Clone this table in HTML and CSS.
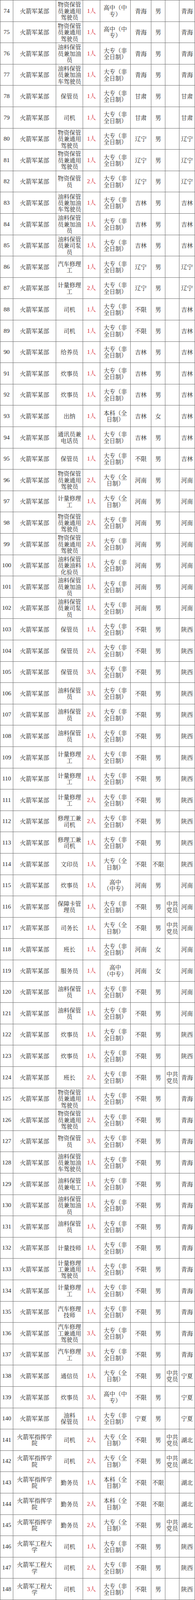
FILE: index.html
```html
<!DOCTYPE html>
<html lang="zh-CN">
<head>
<meta charset="utf-8">
<title>招聘岗位表</title>
<link rel="stylesheet" href="styles.css">
</head>
<body>
<div class="grid">
<div class="row"><div class="c n">74</div><div class="c">火箭军某部</div><div class="c">物资保管<br>员兼通用<br>驾驶员</div><div class="c cnt">1人</div><div class="c">高中（中<br>专）</div><div class="c">青海</div><div class="c">男</div><div class="c"></div><div class="c">青海</div></div>
<div class="row"><div class="c n">75</div><div class="c">火箭军某部</div><div class="c">物资保管<br>员兼通用<br>驾驶员</div><div class="c cnt">1人</div><div class="c">高中（中<br>专）</div><div class="c">青海</div><div class="c">男</div><div class="c"></div><div class="c">青海</div></div>
<div class="row"><div class="c n">76</div><div class="c">火箭军某部</div><div class="c">油料保管<br>员兼加油<br>员</div><div class="c cnt">1人</div><div class="c">大专（非<br>全日制）</div><div class="c">青海</div><div class="c">男</div><div class="c"></div><div class="c">青海</div></div>
<div class="row"><div class="c n">77</div><div class="c">火箭军某部</div><div class="c">油料保管<br>员兼加油<br>车驾驶员</div><div class="c cnt">1人</div><div class="c">大专（非<br>全日制）</div><div class="c">青海</div><div class="c">男</div><div class="c"></div><div class="c">青海</div></div>
<div class="row"><div class="c n">78</div><div class="c">火箭军某部</div><div class="c">保管员</div><div class="c cnt">1人</div><div class="c">大专（非<br>全日制）</div><div class="c">甘肃</div><div class="c">男</div><div class="c"></div><div class="c">甘肃</div></div>
<div class="row"><div class="c n">79</div><div class="c">火箭军某部</div><div class="c">司机</div><div class="c cnt">1人</div><div class="c">大专（非<br>全日制）</div><div class="c">甘肃</div><div class="c">男</div><div class="c"></div><div class="c">甘肃</div></div>
<div class="row"><div class="c n">80</div><div class="c">火箭军某部</div><div class="c">物资保管<br>员兼通用<br>驾驶员</div><div class="c cnt">1人</div><div class="c">大专（非<br>全日制）</div><div class="c">辽宁</div><div class="c">男</div><div class="c"></div><div class="c">辽宁</div></div>
<div class="row"><div class="c n">81</div><div class="c">火箭军某部</div><div class="c">物资保管<br>员兼通用<br>驾驶员</div><div class="c cnt">1人</div><div class="c">大专（非<br>全日制）</div><div class="c">辽宁</div><div class="c">男</div><div class="c"></div><div class="c">辽宁</div></div>
<div class="row"><div class="c n">82</div><div class="c">火箭军某部</div><div class="c">物资保管<br>员</div><div class="c cnt">2人</div><div class="c">大专（非<br>全日制）</div><div class="c">辽宁</div><div class="c">男</div><div class="c"></div><div class="c">辽宁</div></div>
<div class="row"><div class="c n">83</div><div class="c">火箭军某部</div><div class="c">油料保管<br>员兼加油<br>车驾驶员</div><div class="c cnt">1人</div><div class="c">大专（非<br>全日制）</div><div class="c">吉林</div><div class="c">男</div><div class="c"></div><div class="c">吉林</div></div>
<div class="row"><div class="c n">84</div><div class="c">火箭军某部</div><div class="c">油料保管<br>员兼加油<br>员</div><div class="c cnt">1人</div><div class="c">大专（非<br>全日制）</div><div class="c">吉林</div><div class="c">男</div><div class="c"></div><div class="c">吉林</div></div>
<div class="row"><div class="c n">85</div><div class="c">火箭军某部</div><div class="c">油料保管<br>员兼司泵<br>员</div><div class="c cnt">1人</div><div class="c">大专（非<br>全日制）</div><div class="c">吉林</div><div class="c">男</div><div class="c"></div><div class="c">吉林</div></div>
<div class="row"><div class="c n">86</div><div class="c">火箭军某部</div><div class="c">汽车修理<br>工</div><div class="c cnt">1人</div><div class="c">大专（非<br>全日制）</div><div class="c">辽宁</div><div class="c">男</div><div class="c"></div><div class="c">辽宁</div></div>
<div class="row"><div class="c n">87</div><div class="c">火箭军某部</div><div class="c">计量修理<br>工</div><div class="c cnt">2人</div><div class="c">大专（非<br>全日制）</div><div class="c">辽宁</div><div class="c">男</div><div class="c"></div><div class="c">辽宁</div></div>
<div class="row"><div class="c n">88</div><div class="c">火箭军某部</div><div class="c">司机</div><div class="c cnt">1人</div><div class="c">大专（非<br>全日制）</div><div class="c">不限</div><div class="c">男</div><div class="c"></div><div class="c">吉林</div></div>
<div class="row"><div class="c n">89</div><div class="c">火箭军某部</div><div class="c">司机</div><div class="c cnt">1人</div><div class="c">大专（非<br>全日制）</div><div class="c">不限</div><div class="c">男</div><div class="c"></div><div class="c">吉林</div></div>
<div class="row"><div class="c n">90</div><div class="c">火箭军某部</div><div class="c">给养员</div><div class="c cnt">1人</div><div class="c">大专（非<br>全日制）</div><div class="c">吉林</div><div class="c">男</div><div class="c"></div><div class="c">吉林</div></div>
<div class="row"><div class="c n">91</div><div class="c">火箭军某部</div><div class="c">炊事员</div><div class="c cnt">1人</div><div class="c">大专（非<br>全日制）</div><div class="c">吉林</div><div class="c">男</div><div class="c"></div><div class="c">吉林</div></div>
<div class="row"><div class="c n">92</div><div class="c">火箭军某部</div><div class="c">炊事员</div><div class="c cnt">1人</div><div class="c">大专（非<br>全日制）</div><div class="c">吉林</div><div class="c">男</div><div class="c"></div><div class="c">吉林</div></div>
<div class="row"><div class="c n">93</div><div class="c">火箭军某部</div><div class="c">出纳</div><div class="c cnt">1人</div><div class="c">本科（全<br>日制）</div><div class="c">吉林</div><div class="c">女</div><div class="c"></div><div class="c">吉林</div></div>
<div class="row"><div class="c n">94</div><div class="c">火箭军某部</div><div class="c">通讯员兼<br>电话员</div><div class="c cnt">1人</div><div class="c">大专（非<br>全日制）</div><div class="c">吉林</div><div class="c">男</div><div class="c"></div><div class="c">吉林</div></div>
<div class="row"><div class="c n">95</div><div class="c">火箭军某部</div><div class="c">保管员</div><div class="c cnt">1人</div><div class="c">大专（非<br>全日制）</div><div class="c">不限</div><div class="c">男</div><div class="c"></div><div class="c">吉林</div></div>
<div class="row"><div class="c n">96</div><div class="c">火箭军某部</div><div class="c">物资保管<br>员兼通用<br>驾驶员</div><div class="c cnt">2人</div><div class="c">大专（全<br>日制）</div><div class="c">河南</div><div class="c">男</div><div class="c"></div><div class="c">河南</div></div>
<div class="row"><div class="c n">97</div><div class="c">火箭军某部</div><div class="c">计量修理<br>工</div><div class="c cnt">1人</div><div class="c">大专（全<br>日制）</div><div class="c">河南</div><div class="c">男</div><div class="c"></div><div class="c">河南</div></div>
<div class="row"><div class="c n">98</div><div class="c">火箭军某部</div><div class="c">物资保管<br>员兼通用<br>驾驶员</div><div class="c cnt">2人</div><div class="c">大专（非<br>全日制）</div><div class="c">河南</div><div class="c">男</div><div class="c"></div><div class="c">河南</div></div>
<div class="row"><div class="c n">99</div><div class="c">火箭军某部</div><div class="c">物资保管<br>员兼通用<br>驾驶员</div><div class="c cnt">2人</div><div class="c">大专（非<br>全日制）</div><div class="c">河南</div><div class="c">男</div><div class="c"></div><div class="c">河南</div></div>
<div class="row"><div class="c n">100</div><div class="c">火箭军某部</div><div class="c">油料保管<br>员兼油料<br>化验员</div><div class="c cnt">1人</div><div class="c">大专（非<br>全日制）</div><div class="c">河南</div><div class="c">男</div><div class="c"></div><div class="c">河南</div></div>
<div class="row"><div class="c n">101</div><div class="c">火箭军某部</div><div class="c">油料保管<br>员兼加油<br>员</div><div class="c cnt">1人</div><div class="c">大专（非<br>全日制）</div><div class="c">河南</div><div class="c">男</div><div class="c"></div><div class="c">河南</div></div>
<div class="row"><div class="c n">102</div><div class="c">火箭军某部</div><div class="c">油料保管<br>员兼司泵<br>员</div><div class="c cnt">1人</div><div class="c">大专（非<br>全日制）</div><div class="c">河南</div><div class="c">男</div><div class="c"></div><div class="c">河南</div></div>
<div class="row"><div class="c n">103</div><div class="c">火箭军某部</div><div class="c">保管员</div><div class="c cnt">1人</div><div class="c">大专（非<br>全日制）</div><div class="c">不限</div><div class="c">男</div><div class="c"></div><div class="c">陕西</div></div>
<div class="row"><div class="c n">104</div><div class="c">火箭军某部</div><div class="c">保管员</div><div class="c cnt">2人</div><div class="c">大专（非<br>全日制）</div><div class="c">不限</div><div class="c">男</div><div class="c"></div><div class="c">陕西</div></div>
<div class="row"><div class="c n">105</div><div class="c">火箭军某部</div><div class="c">保管员</div><div class="c cnt">3人</div><div class="c">大专（非<br>全日制）</div><div class="c">不限</div><div class="c">男</div><div class="c"></div><div class="c">陕西</div></div>
<div class="row"><div class="c n">106</div><div class="c">火箭军某部</div><div class="c">油料保管<br>员</div><div class="c cnt">3人</div><div class="c">大专（非<br>全日制）</div><div class="c">不限</div><div class="c">男</div><div class="c"></div><div class="c">陕西</div></div>
<div class="row"><div class="c n">107</div><div class="c">火箭军某部</div><div class="c">油料保管<br>员</div><div class="c cnt">2人</div><div class="c">大专（非<br>全日制）</div><div class="c">不限</div><div class="c">男</div><div class="c"></div><div class="c">陕西</div></div>
<div class="row"><div class="c n">108</div><div class="c">火箭军某部</div><div class="c">油料保管<br>员</div><div class="c cnt">1人</div><div class="c">大专（非<br>全日制）</div><div class="c">不限</div><div class="c">男</div><div class="c"></div><div class="c">陕西</div></div>
<div class="row"><div class="c n">109</div><div class="c">火箭军某部</div><div class="c">计量修理<br>工</div><div class="c cnt">2人</div><div class="c">大专（非<br>全日制）</div><div class="c">不限</div><div class="c">男</div><div class="c"></div><div class="c">陕西</div></div>
<div class="row"><div class="c n">110</div><div class="c">火箭军某部</div><div class="c">计量修理<br>工</div><div class="c cnt">1人</div><div class="c">大专（非<br>全日制）</div><div class="c">不限</div><div class="c">男</div><div class="c"></div><div class="c">陕西</div></div>
<div class="row"><div class="c n">111</div><div class="c">火箭军某部</div><div class="c">计量修理<br>工</div><div class="c cnt">2人</div><div class="c">大专（非<br>全日制）</div><div class="c">不限</div><div class="c">男</div><div class="c"></div><div class="c">陕西</div></div>
<div class="row"><div class="c n">112</div><div class="c">火箭军某部</div><div class="c">修理工兼<br>司机</div><div class="c cnt">2人</div><div class="c">大专（非<br>全日制）</div><div class="c">不限</div><div class="c">男</div><div class="c"></div><div class="c">陕西</div></div>
<div class="row"><div class="c n">113</div><div class="c">火箭军某部</div><div class="c">修理工兼<br>司机</div><div class="c cnt">1人</div><div class="c">大专（非<br>全日制）</div><div class="c">不限</div><div class="c">男</div><div class="c"></div><div class="c">陕西</div></div>
<div class="row"><div class="c n">114</div><div class="c">火箭军某部</div><div class="c">文印员</div><div class="c cnt">1人</div><div class="c">大专（全<br>日制）</div><div class="c">不限</div><div class="c">不限</div><div class="c"></div><div class="c">陕西</div></div>
<div class="row"><div class="c n">115</div><div class="c">火箭军某部</div><div class="c">炊事员</div><div class="c cnt">1人</div><div class="c">高中<br>（中专）</div><div class="c">河南</div><div class="c">男</div><div class="c"></div><div class="c">河南</div></div>
<div class="row"><div class="c n">116</div><div class="c">火箭军某部</div><div class="c">保障卡管<br>理员</div><div class="c cnt">1人</div><div class="c">大专（非<br>全日制）</div><div class="c">不限</div><div class="c">男</div><div class="c">中共<br>党员</div><div class="c">河南</div></div>
<div class="row"><div class="c n">117</div><div class="c">火箭军某部</div><div class="c">司务长</div><div class="c cnt">1人</div><div class="c">大专（全<br>日制）</div><div class="c">不限</div><div class="c">男</div><div class="c">中共<br>党员</div><div class="c">河南</div></div>
<div class="row"><div class="c n">118</div><div class="c">火箭军某部</div><div class="c">班长</div><div class="c cnt">1人</div><div class="c">大专（非<br>全日制）</div><div class="c">河南</div><div class="c">女</div><div class="c"></div><div class="c">河南</div></div>
<div class="row"><div class="c n">119</div><div class="c">火箭军某部</div><div class="c">服务员</div><div class="c cnt">1人</div><div class="c">高中<br>（中专）</div><div class="c">河南</div><div class="c">女</div><div class="c"></div><div class="c">河南</div></div>
<div class="row"><div class="c n">120</div><div class="c">火箭军某部</div><div class="c">油料保管<br>员</div><div class="c cnt">1人</div><div class="c">大专（非<br>全日制）</div><div class="c">不限</div><div class="c">男</div><div class="c"></div><div class="c">河南</div></div>
<div class="row"><div class="c n">121</div><div class="c">火箭军某部</div><div class="c">油料保管<br>员</div><div class="c cnt">1人</div><div class="c">大专（非<br>全日制）</div><div class="c">不限</div><div class="c">男</div><div class="c"></div><div class="c">河南</div></div>
<div class="row"><div class="c n">122</div><div class="c">火箭军某部</div><div class="c">炊事员</div><div class="c cnt">1人</div><div class="c">大专（非<br>全日制）</div><div class="c">不限</div><div class="c">男</div><div class="c"></div><div class="c">陕西</div></div>
<div class="row"><div class="c n">123</div><div class="c">火箭军某部</div><div class="c">炊事员</div><div class="c cnt">1人</div><div class="c">大专（非<br>全日制）</div><div class="c">不限</div><div class="c">男</div><div class="c"></div><div class="c">陕西</div></div>
<div class="row"><div class="c n">124</div><div class="c">火箭军某部</div><div class="c">班长</div><div class="c cnt">2人</div><div class="c">大专（非<br>全日制）</div><div class="c">不限</div><div class="c">男</div><div class="c">中共<br>党员</div><div class="c">青海</div></div>
<div class="row"><div class="c n">125</div><div class="c">火箭军某部</div><div class="c">物资保管<br>员兼通用<br>驾驶员</div><div class="c cnt">1人</div><div class="c">大专（非<br>全日制）</div><div class="c">不限</div><div class="c">男</div><div class="c"></div><div class="c">青海</div></div>
<div class="row"><div class="c n">126</div><div class="c">火箭军某部</div><div class="c">物资保管<br>员兼通用<br>驾驶员</div><div class="c cnt">2人</div><div class="c">大专（非<br>全日制）</div><div class="c">不限</div><div class="c">男</div><div class="c"></div><div class="c">青海</div></div>
<div class="row"><div class="c n">127</div><div class="c">火箭军某部</div><div class="c">物资保管<br>员</div><div class="c cnt">3人</div><div class="c">大专（非<br>全日制）</div><div class="c">不限</div><div class="c">男</div><div class="c"></div><div class="c">青海</div></div>
<div class="row"><div class="c n">128</div><div class="c">火箭军某部</div><div class="c">油料保管<br>员兼加油<br>车驾驶员</div><div class="c cnt">1人</div><div class="c">大专（非<br>全日制）</div><div class="c">不限</div><div class="c">男</div><div class="c"></div><div class="c">青海</div></div>
<div class="row"><div class="c n">129</div><div class="c">火箭军某部</div><div class="c">油料保管<br>员兼电工</div><div class="c cnt">1人</div><div class="c">大专（非<br>全日制）</div><div class="c">不限</div><div class="c">男</div><div class="c"></div><div class="c">青海</div></div>
<div class="row"><div class="c n">130</div><div class="c">火箭军某部</div><div class="c">油料保管<br>员兼加油<br>员</div><div class="c cnt">1人</div><div class="c">大专（非<br>全日制）</div><div class="c">不限</div><div class="c">男</div><div class="c"></div><div class="c">青海</div></div>
<div class="row"><div class="c n">131</div><div class="c">火箭军某部</div><div class="c">油料保管<br>员</div><div class="c cnt">1人</div><div class="c">大专（非<br>全日制）</div><div class="c">不限</div><div class="c">男</div><div class="c"></div><div class="c">青海</div></div>
<div class="row"><div class="c n">132</div><div class="c">火箭军某部</div><div class="c">计量技师</div><div class="c cnt">1人</div><div class="c">大专（非<br>全日制）</div><div class="c">不限</div><div class="c">男</div><div class="c"></div><div class="c">青海</div></div>
<div class="row"><div class="c n">133</div><div class="c">火箭军某部</div><div class="c">计量修理<br>工兼通用<br>驾驶员</div><div class="c cnt">1人</div><div class="c">大专（非<br>全日制）</div><div class="c">不限</div><div class="c">男</div><div class="c"></div><div class="c">青海</div></div>
<div class="row"><div class="c n">134</div><div class="c">火箭军某部</div><div class="c">计量修理<br>工</div><div class="c cnt">1人</div><div class="c">大专（非<br>全日制）</div><div class="c">不限</div><div class="c">男</div><div class="c"></div><div class="c">青海</div></div>
<div class="row"><div class="c n">135</div><div class="c">火箭军某部</div><div class="c">汽车修理<br>技师</div><div class="c cnt">1人</div><div class="c">大专（非<br>全日制）</div><div class="c">不限</div><div class="c">男</div><div class="c"></div><div class="c">青海</div></div>
<div class="row"><div class="c n">136</div><div class="c">火箭军某部</div><div class="c">汽车修理<br>工兼通用<br>驾驶员</div><div class="c cnt">3人</div><div class="c">大专（非<br>全日制）</div><div class="c">不限</div><div class="c">男</div><div class="c"></div><div class="c">青海</div></div>
<div class="row"><div class="c n">137</div><div class="c">火箭军某部</div><div class="c">汽车修理<br>工</div><div class="c cnt">3人</div><div class="c">大专（非<br>全日制）</div><div class="c">不限</div><div class="c">男</div><div class="c"></div><div class="c">青海</div></div>
<div class="row"><div class="c n">138</div><div class="c">火箭军某部</div><div class="c">通信员</div><div class="c cnt">1人</div><div class="c">大专（全<br>日制）</div><div class="c">不限</div><div class="c">男</div><div class="c">中共<br>党员</div><div class="c">宁夏</div></div>
<div class="row"><div class="c n">139</div><div class="c">火箭军某部</div><div class="c">炊事员</div><div class="c cnt">3人</div><div class="c">高中（中<br>专）</div><div class="c">不限</div><div class="c">男</div><div class="c"></div><div class="c">宁夏</div></div>
<div class="row"><div class="c n">140</div><div class="c">火箭军某部</div><div class="c">油料<br>保管员</div><div class="c cnt">1人</div><div class="c">大专（非<br>全日制）</div><div class="c">宁夏</div><div class="c">男</div><div class="c"></div><div class="c">宁夏</div></div>
<div class="row"><div class="c n">141</div><div class="c">火箭军指挥学<br>院</div><div class="c">司机</div><div class="c cnt">2人</div><div class="c">大专（全<br>日制）</div><div class="c">不限</div><div class="c">男</div><div class="c">中共<br>党员</div><div class="c">湖北</div></div>
<div class="row"><div class="c n">142</div><div class="c">火箭军指挥学<br>院</div><div class="c">司机</div><div class="c cnt">2人</div><div class="c">大专（全<br>日制）</div><div class="c">不限</div><div class="c">男</div><div class="c">中共<br>党员</div><div class="c">湖北</div></div>
<div class="row"><div class="c n">143</div><div class="c">火箭军指挥学<br>院</div><div class="c">勤务员</div><div class="c cnt">1人</div><div class="c">本科（全<br>日制）</div><div class="c">不限</div><div class="c">不限</div><div class="c"></div><div class="c">湖北</div></div>
<div class="row"><div class="c n">144</div><div class="c">火箭军指挥学<br>院</div><div class="c">勤务员</div><div class="c cnt">2人</div><div class="c">本科（全<br>日制）</div><div class="c">不限</div><div class="c">不限</div><div class="c"></div><div class="c">湖北</div></div>
<div class="row"><div class="c n">145</div><div class="c">火箭军指挥学<br>院</div><div class="c">勤务员</div><div class="c cnt">2人</div><div class="c">大专（全<br>日制）</div><div class="c">不限</div><div class="c">男</div><div class="c">中共<br>党员</div><div class="c">湖北</div></div>
<div class="row"><div class="c n">146</div><div class="c">火箭军工程大<br>学</div><div class="c">司机</div><div class="c cnt">1人</div><div class="c">大专（非<br>全日制）</div><div class="c">不限</div><div class="c">男</div><div class="c"></div><div class="c">陕西</div></div>
<div class="row"><div class="c n">147</div><div class="c">火箭军工程大<br>学</div><div class="c">司机</div><div class="c cnt">2人</div><div class="c">大专（非<br>全日制）</div><div class="c">不限</div><div class="c">男</div><div class="c"></div><div class="c">陕西</div></div>
<div class="row"><div class="c n">148</div><div class="c">火箭军工程大<br>学</div><div class="c">司机</div><div class="c cnt">3人</div><div class="c">大专（非<br>全日制）</div><div class="c">不限</div><div class="c">男</div><div class="c"></div><div class="c">陕西</div></div>
</div>
</body>
</html>
```

FILE: styles.css
```css
html, body {
  margin: 0;
  padding: 0;
  background: #ffffff;
}

/* 75 rows share the full window height (reference: 58.25px per row at 4369px) */
.grid {
  box-sizing: border-box;
  width: 500px;
  height: 100vh;
  display: grid;
  grid-template-columns: 33px 110px 69px 44px 78px 53px 36px 36px 40px;
  grid-template-rows: repeat(75, minmax(0, 1fr));
  border-top: 1px solid #6c6c6c;
  border-left: 1px solid #6c6c6c;
  font-family: "Noto Serif CJK SC", "Noto Sans CJK SC", serif;
  font-size: 15px;
  line-height: calc(100vh * 17.5 / 4369);
  color: #1e1e1e;
}

.row {
  display: contents;
}

.c {
  box-sizing: border-box;
  border-right: 1px solid #6c6c6c;
  border-bottom: 1px solid #6c6c6c;
  display: flex;
  flex-direction: column;
  align-items: center;
  justify-content: center;
  text-align: center;
  white-space: nowrap;
  min-width: 0;
  min-height: 0;
}

.c.n {
  font-family: "Liberation Serif", serif;
  font-size: 15.5px;
}

.c.cnt {
  font-family: "Liberation Serif", "Noto Serif CJK SC", "Noto Sans CJK SC", serif;
  color: #d8202c;
}
```
